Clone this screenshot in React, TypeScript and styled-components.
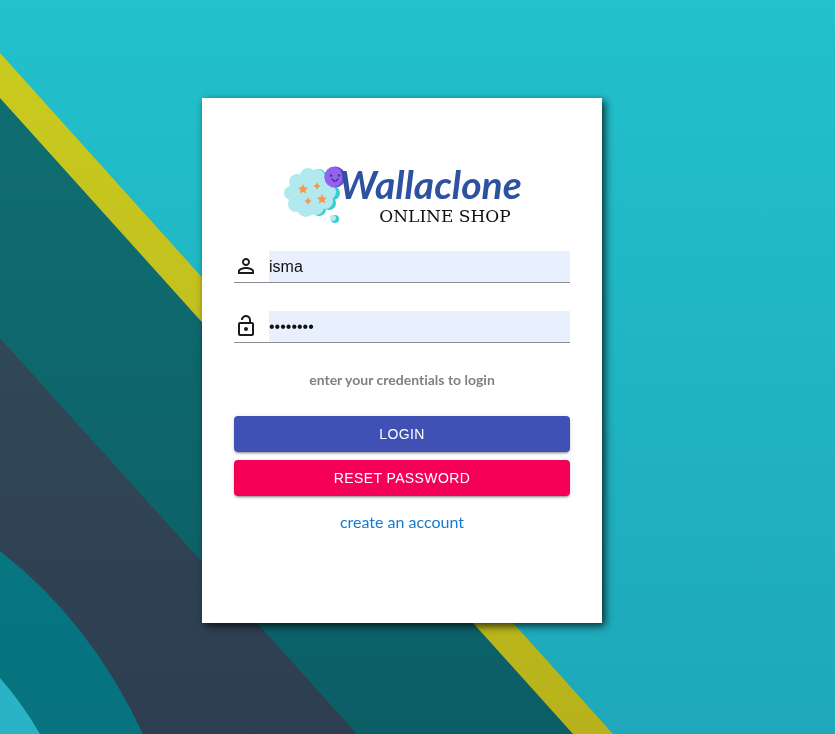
import React, { useState } from "react";
import styled, { createGlobalStyle } from "styled-components";

const GlobalStyle = createGlobalStyle`
  *, *::before, *::after { box-sizing: border-box; }
  body { margin: 0; background: #1fb3c2; font-family: Lato, "Open Sans", sans-serif; }
`;

const Page = styled.main`
  min-height: 100vh;
  display: flex;
  align-items: center;
  justify-content: center;
  padding: 16px 31px 29px 0;
`;

const Backdrop = styled.svg`
  position: fixed;
  inset: 0;
  width: 100%;
  height: 100%;
  z-index: -1;
`;

const Card = styled.section`
  width: 100%;
  max-width: 400px;
  padding: 64px 32px 90px;
  background: #fff;
  box-shadow: 3px 3px 8px rgba(0, 0, 0, 0.75);
`;

const Brand = styled.h1`
  display: flex;
  justify-content: center;
  height: 64px;
  margin: 0 0 25px;
  font-weight: 400;
`;

const BrandMark = styled.svg`
  flex: none;
  width: 64px;
  height: 64px;
  margin-right: -7px;
`;

const BrandText = styled.span`
  display: flex;
  flex-direction: column;
  align-items: flex-end;
`;

const BrandName = styled.span`
  color: #2d53a0;
  font: italic 700 39px/44px Lato, sans-serif;
`;

const BrandTagline = styled.span`
  padding-right: 11px;
  color: #111;
  font: 400 17px/20px "DejaVu Serif", serif;
  white-space: nowrap;
`;

const Form = styled.form`
  display: flex;
  flex-direction: column;
`;

const Field = styled.div`
  display: flex;
  align-items: center;
  gap: 11px;
  height: 32px;
  margin-bottom: 28px;
  border-bottom: 1px solid #8b8b91;
`;

const FieldLabel = styled.label`
  display: flex;
  flex: none;
  height: 26px;
  color: #1c1c1c;
`;

const FieldIcon = styled.svg`
  width: 24px;
  height: 24px;
  fill: currentColor;
`;

const Input = styled.input`
  flex: 1;
  min-width: 0;
  height: 31px;
  padding: 0;
  border: 0;
  outline: 0;
  background: #e8f0fe;
  color: #111;
  font: 16px "Liberation Sans", Arial, sans-serif;
`;

const Hint = styled.p`
  margin: 0 0 28px;
  color: #808080;
  font-size: 14px;
  font-weight: 700;
  font-variant-ligatures: none;
  line-height: 17px;
  text-align: center;
`;

const Button = styled.button<{ $tone: string }>`
  height: 36px;
  margin-bottom: 8px;
  border: 0;
  border-radius: 4px;
  background: ${({ $tone }) => $tone};
  color: #fff;
  font: 14px "Liberation Sans", Arial, sans-serif;
  letter-spacing: 0.02857em;
  text-transform: uppercase;
  cursor: pointer;
  box-shadow: 0 3px 1px -2px rgba(0, 0, 0, 0.2), 0 2px 2px rgba(0, 0, 0, 0.14),
    0 1px 5px rgba(0, 0, 0, 0.12);
`;

const AccountLink = styled.a`
  align-self: center;
  margin: 7px 0 1px;
  color: #147bd1;
  font-size: 16px;
  line-height: 21px;
  text-decoration: none;
`;

const star = "M0-5 1.5-1.7 5-1.3 2.4 1 3.1 4.5 0 2.8-3.1 4.5-2.4 1-5-1.3-1.5-1.7Z";
const spark = "M0-3.5Q1-1 3.5 0 1 1 0 3.5-1 1-3.5 0-1-1 0-3.5Z";

function Landscape() {
  return (
    <Backdrop viewBox="0 0 835 734" preserveAspectRatio="xMinYMin slice" aria-hidden="true">
      <defs>
        {[
          ["sky", "#22c1cb", "#1ea8ba"],
          ["stripe", "#cbcc20", "#b7b21b"],
          ["forest", "#107071", "#0c5e66"],
          ["slate", "#34505e", "#2d3e50"],
          ["arc", "#098087", "#06737f"],
        ].map(([id, from, to]) => (
          <linearGradient key={id} id={id} gradientUnits="userSpaceOnUse" x1="0" y1="0" x2="0" y2="734">
            <stop stopColor={from} />
            <stop offset="1" stopColor={to} />
          </linearGradient>
        ))}
      </defs>
      <path fill="url(#sky)" d="M0 0H835V734H0Z" />
      <path fill="url(#stripe)" d="M0 53 613 734H0Z" />
      <path fill="url(#forest)" d="M0 98 573 734H0Z" />
      <path fill="url(#slate)" d="M0 338 357 734H0Z" />
      <path fill="url(#arc)" d="M0 551Q90 621 143 734H0Z" />
      <path fill="#29b3c5" d="M0 678Q22 703 40 734H0Z" />
    </Backdrop>
  );
}

function Logo() {
  return (
    <Brand>
      <BrandMark viewBox="0 0 64 64" aria-hidden="true">
        <g fill="#37cfca">
          <circle cx="37" cy="14" r="7" />
          <circle cx="48" cy="20" r="8" />
          <circle cx="51" cy="31" r="7" />
          <circle cx="47" cy="41" r="7" />
          <circle cx="37" cy="47" r="7" />
          <circle cx="53" cy="57" r="4" />
        </g>
        <g fill="#b1e9ef">
          <circle cx="26" cy="14" r="8" />
          <circle cx="35" cy="15" r="8" />
          <circle cx="15" cy="20" r="8" />
          <circle cx="9" cy="31" r="7" />
          <circle cx="14" cy="42" r="8" />
          <circle cx="24" cy="46" r="9" />
          <circle cx="34" cy="45" r="8" />
          <circle cx="43" cy="39" r="8" />
          <circle cx="46" cy="30" r="8" />
          <circle cx="42" cy="22" r="8" />
          <circle cx="27" cy="30" r="19" />
          <circle cx="51" cy="56" r="3" />
        </g>
        <g fill="#ff944d">
          <path transform="translate(21 27)" d={star} />
          <path transform="translate(40 37)" d={star} />
          <path transform="translate(35 24)" d={spark} />
          <path transform="translate(26 39)" d={spark} />
        </g>
        <circle cx="53" cy="15" r="10.5" fill="#7548cb" />
        <ellipse cx="51.5" cy="15" rx="9" ry="10" fill="#9462f2" />
        <g fill="#4b3a88">
          <circle cx="49" cy="13.5" r="1.3" />
          <circle cx="57" cy="13.5" r="1.3" />
        </g>
        <path d="M50 17Q53 21.5 56 17" fill="none" stroke="#4b3a88" strokeWidth="1.5" strokeLinecap="round" />
      </BrandMark>
      <BrandText>
        <BrandName>Wallaclone</BrandName>
        <BrandTagline>ONLINE SHOP</BrandTagline>
      </BrandText>
    </Brand>
  );
}

export default function App() {
  const [user, setUser] = useState("isma");
  const [password, setPassword] = useState("password");

  return (
    <>
      <GlobalStyle />
      <Landscape />
      <Page>
        <Card>
          <Logo />
          <Form onSubmit={(event) => event.preventDefault()}>
            <Field>
              <FieldLabel htmlFor="user" aria-label="Username">
                <FieldIcon viewBox="0 0 24 24" aria-hidden="true">
                  <path d="M12 5.9a2.1 2.1 0 1 1 0 4.2 2.1 2.1 0 0 1 0-4.2m0 9c2.97 0 6.1 1.46 6.1 2.1v1.1H5.9V17c0-.64 3.13-2.1 6.1-2.1M12 4C9.79 4 8 5.79 8 8s1.79 4 4 4 4-1.79 4-4-1.79-4-4-4zm0 9c-2.67 0-8 1.34-8 4v3h16v-3c0-2.66-5.33-4-8-4z" />
                </FieldIcon>
              </FieldLabel>
              <Input id="user" type="text" value={user} onChange={(event) => setUser(event.target.value)} />
            </Field>
            <Field>
              <FieldLabel htmlFor="password" aria-label="Password">
                <FieldIcon viewBox="0 0 24 24" aria-hidden="true">
                  <path d="M12 17c1.1 0 2-.9 2-2s-.9-2-2-2-2 .9-2 2 .9 2 2 2zm6-9h-1V6c0-2.76-2.24-5-5-5S7 3.24 7 6h1.9c0-1.71 1.39-3.1 3.1-3.1 1.71 0 3.1 1.39 3.1 3.1v2H6c-1.1 0-2 .9-2 2v10c0 1.1.9 2 2 2h12c1.1 0 2-.9 2-2V10c0-1.1-.9-2-2-2zm0 12H6V10h12v10z" />
                </FieldIcon>
              </FieldLabel>
              <Input
                id="password"
                type="password"
                value={password}
                onChange={(event) => setPassword(event.target.value)}
              />
            </Field>
            <Hint>enter your credentials to login</Hint>
            <Button type="submit" $tone="#3f51b5">Login</Button>
            <Button type="button" $tone="#f50057">Reset password</Button>
            <AccountLink href="#register">create an account</AccountLink>
          </Form>
        </Card>
      </Page>
    </>
  );
}
